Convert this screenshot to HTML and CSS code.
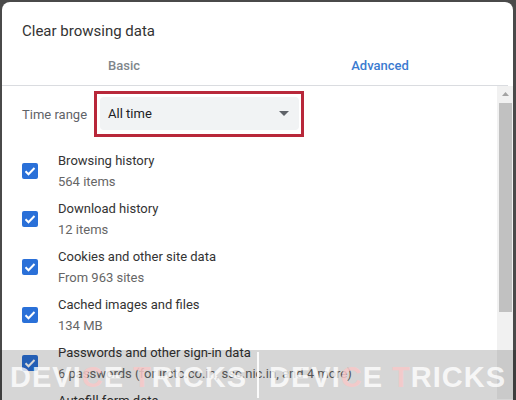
FILE: index.html
```html
<!DOCTYPE html>
<html lang="en">
<head>
  <meta charset="UTF-8">
  <title>Clear browsing data</title>
  <link rel="stylesheet" href="styles.css">
</head>
<body>
  <div class="dialog">
    <h1 class="title">Clear browsing data</h1>
    <div class="tabs">
      <div class="tab">Basic</div>
      <div class="tab active">Advanced</div>
    </div>

    <div class="body">
      <div class="list">
        <div class="range">
          <span class="range-label">Time range</span>
          <div class="highlight">
            <div class="select">
              <span>All time</span>
              <svg class="caret" width="10" height="5" viewBox="0 0 10 5"><path d="M0 0h10L5 5z" fill="#5f6368"/></svg>
            </div>
          </div>
        </div>

        <div class="item">
          <span class="check"><svg width="16" height="16" viewBox="0 0 16 16"><path d="M3.5 8.2l3 3 6-6.2" fill="none" stroke="#fff" stroke-width="2"/></svg></span>
          <div class="text"><div class="main">Browsing history</div><div class="sub">564 items</div></div>
        </div>
        <div class="item">
          <span class="check"><svg width="16" height="16" viewBox="0 0 16 16"><path d="M3.5 8.2l3 3 6-6.2" fill="none" stroke="#fff" stroke-width="2"/></svg></span>
          <div class="text"><div class="main">Download history</div><div class="sub">12 items</div></div>
        </div>
        <div class="item">
          <span class="check"><svg width="16" height="16" viewBox="0 0 16 16"><path d="M3.5 8.2l3 3 6-6.2" fill="none" stroke="#fff" stroke-width="2"/></svg></span>
          <div class="text"><div class="main">Cookies and other site data</div><div class="sub">From 963 sites</div></div>
        </div>
        <div class="item">
          <span class="check"><svg width="16" height="16" viewBox="0 0 16 16"><path d="M3.5 8.2l3 3 6-6.2" fill="none" stroke="#fff" stroke-width="2"/></svg></span>
          <div class="text"><div class="main">Cached images and files</div><div class="sub">134 MB</div></div>
        </div>
        <div class="item">
          <span class="check"><svg width="16" height="16" viewBox="0 0 16 16"><path d="M3.5 8.2l3 3 6-6.2" fill="none" stroke="#fff" stroke-width="2"/></svg></span>
          <div class="text"><div class="main">Passwords and other sign-in data</div><div class="sub">6 passwords (for irctc.co.in, ssc.nic.in, and 4 more)</div></div>
        </div>
        <div class="item">
          <span class="check"><svg width="16" height="16" viewBox="0 0 16 16"><path d="M3.5 8.2l3 3 6-6.2" fill="none" stroke="#fff" stroke-width="2"/></svg></span>
          <div class="text"><div class="main">Autofill form data</div><div class="sub"></div></div>
        </div>
      </div>

      <!-- scrollbar -->
      <div class="scrollbar">
        <svg class="arrow" width="7" height="4" viewBox="0 0 7 4"><path d="M0 4h7L3.5 0z" fill="#a3a3a3"/></svg>
        <div class="thumb"></div>
      </div>
    </div>
  </div>

  <!-- watermark -->
  <div class="watermark">
    <span class="mark">DEVI<span class="pink">C</span>E <span class="pink">T</span>RICKS</span>
    <span class="divider"></span>
    <span class="mark">DEVI<span class="pink">C</span>E <span class="pink">T</span>RICKS</span>
  </div>
</body>
</html>
```

FILE: styles.css
```css
body {
  margin: 0;
  background-color: #4a4a4a;
  font-family: Roboto, 'Liberation Sans', sans-serif;
  overflow: hidden;
}
.dialog {
  margin: 2px 3px 0 2px;
  height: 398px;
  background-color: #fff;
  border-radius: 8px 8px 0 0;
  overflow: hidden;
}
.title {
  margin: 0;
  padding: 19px 0 0 20px;
  font-size: 15px;
  font-weight: normal;
  line-height: 20px;
  color: #333;
}
.tabs {
  display: flex;
  height: 45px;
  margin: 0 5px 0 -6px;
  padding-top: 16px;
  box-sizing: border-box;
  border-bottom: 1px solid #dadce0;
}
.tab {
  flex: 1;
  text-align: center;
  font-size: 13px;
  font-weight: 500;
  line-height: 18px;
  color: #80868b;
}
.tab.active {
  color: #3b7bd0;
}
.body {
  display: flex;
  height: 313px;
}
.list {
  flex: 1;
}
.range {
  display: flex;
  align-items: center;
  padding: 5px 0 0 20px;
  margin-bottom: 10px;
}
.range-label {
  font-size: 13px;
  color: #5f6368;
  margin-right: 7px;
}
.highlight {
  border: 3px solid #b8283a;
  padding: 3px 2px 4px 3px;
  width: 199px;
}
.select {
  display: flex;
  align-items: center;
  justify-content: space-between;
  height: 33px;
  padding: 0 8px;
  background-color: #f1f3f4;
  border-radius: 4px;
  font-size: 13px;
  color: #202124;
}
.caret {
  margin-right: 2px;
}
.item {
  display: flex;
  align-items: center;
  height: 48px;
  padding-left: 20px;
}
.check {
  width: 16px;
  height: 16px;
  border-radius: 2px;
  background-color: #2a70d8;
  margin-right: 20px;
}
.check svg {
  display: block;
}
.text {
  font-size: 13px;
  line-height: 20px;
}
.main {
  color: #333;
}
.sub {
  color: #666;
  margin-top: 1px;
  min-height: 20px;
}
.scrollbar {
  width: 16px;
  background-color: #f1f1f1;
  display: flex;
  flex-direction: column;
  align-items: center;
}
.arrow {
  margin-top: 6px;
}
.thumb {
  margin-top: 7px;
  width: 13px;
  height: 209px;
  background-color: #c1c1c1;
}
.watermark {
  position: absolute;
  left: 0;
  top: 350px;
  width: 516px;
  height: 50px;
  background-color: rgba(0, 0, 0, 0.16);
  display: flex;
  align-items: center;
}
.mark {
  flex: 1;
  text-align: center;
  font-family: 'Liberation Sans', sans-serif;
  font-weight: bold;
  font-size: 29px;
  letter-spacing: 1px;
  color: rgba(255, 255, 255, 0.8);
  padding-top: 4px;
}
.pink {
  color: rgba(248, 200, 200, 0.85);
}
.divider {
  width: 2px;
  height: 46px;
  background-color: rgba(255, 255, 255, 0.9);
}
```
